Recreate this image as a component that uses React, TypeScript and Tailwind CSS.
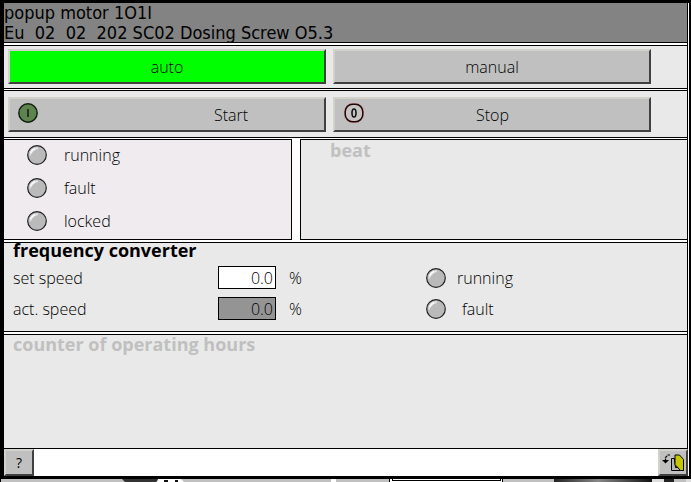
import type { ReactNode } from 'react';

const bevel =
  'border-t-2 border-l-2 border-b-2 border-r-2 border-t-[#d2d2cb] border-l-[#d2d2cb] border-b-[#404040] border-r-[#404040]';

function Lamp() {
  return (
    <svg width="20" height="20" viewBox="0 0 20 20" className="shrink-0" aria-hidden="true">
      <circle cx="10" cy="10" r="9.3" fill="#bababa" stroke="#222" strokeWidth="1.2" />
      <path d="M2.5 11 A8 8 0 0 1 11 2.3 L11 4 Q6 5 3.6 10.5 Z" fill="#e4e4e4" />
      <path d="M3.6 8 A7 7 0 0 1 8 3.6" fill="none" stroke="#f8f8f8" strokeWidth="1.6" />
    </svg>
  );
}

function StartIcon() {
  return (
    <svg width="20" height="20" viewBox="0 0 20 20" aria-hidden="true">
      <circle cx="10" cy="10" r="9.2" fill="#5c8350" stroke="#101c0c" strokeWidth="1.4" />
      <path d="M10 6v8" stroke="#0a1408" strokeWidth="1.4" />
    </svg>
  );
}

function StopIcon() {
  return (
    <svg width="20" height="20" viewBox="0 0 20 20" aria-hidden="true">
      <path d="M6 1h8l5 5v8l-5 5H6l-5-5V6Z" fill="#c8c4c4" stroke="#d09090" strokeWidth="1.4" />
      <rect x="1.200" y="1.200" width="17.600" height="17.600" rx="7.500" fill="#c8c4c4" stroke="#240808" strokeWidth="1.5" />
      <ellipse cx="10" cy="10" rx="2" ry="4" fill="none" stroke="#111" strokeWidth="1.6" />
    </svg>
  );
}

function ExitIcon() {
  return (
    <svg width="22" height="18" viewBox="0 0 22 18" aria-hidden="true">
      <path d="M8 1H6L3.500 3.500V7" fill="none" stroke="#000" strokeWidth="1.2" strokeDasharray="2.500 .8" />
      <path d="M0 6h7L3.500 9.500Z" fill="#000" />
      <path d="M12.500 4.500H9.500V16.500h12l-3-3h-5Z" fill="#b4b4b4" stroke="#000" />
      <path d="M13 1h4.500l4 4.500v11h-3L13 10.500Z" fill="#c6c600" stroke="#000" />
    </svg>
  );
}

function Status({ children, className = '' }: { children: ReactNode; className?: string }) {
  return (
    <div className={`flex items-center ${className}`}>
      <Lamp />
      {children}
    </div>
  );
}

function Speed({ id, label, fill, readOnly }: { id: string; label: string; fill: string; readOnly?: boolean }) {
  return (
    <>
      <label htmlFor={id}>{label}</label>
      <div className="flex items-center gap-[13px]">
        <input
          id={id}
          defaultValue="0.0"
          readOnly={readOnly}
          className={`h-[23px] w-[58px] border border-black pr-0.5 text-right ${fill}`}
        />
        <span>%</span>
      </div>
    </>
  );
}

export default function App() {
  return (
    <div className="bg-black font-['Open_Sans','Noto_Sans',sans-serif] text-base leading-5 font-light text-black">
      <main className="pt-[3px] pr-0.5 pb-[3px] pl-1">
        <div className="bg-white pr-px">
          <div className="flex flex-col gap-0.5 border-r border-black">
            <header className="h-10 border-b border-black bg-[#838383] font-['DejaVu_Sans_Condensed','DejaVu_Sans',sans-serif] text-lg leading-5 font-normal whitespace-pre">
              <h1>popup motor 1O1I</h1>
              <p>Eu  02  02  202 SC02 Dosing Screw O5.3</p>
            </header>

            <div className="flex flex-col gap-px">
              <section className="grid grid-cols-2 gap-[7px] border-y border-black bg-[#e9e9e9] pt-[3px] pr-9 pb-1 pl-1">
                <button className={`h-[35px] bg-[#00ff00] ${bevel}`}>auto</button>
                <button className={`h-[35px] bg-[#c0c0c0] ${bevel}`}>manual</button>
              </section>

              <section className="grid grid-cols-2 gap-[7px] border-y border-black bg-[#e9e9e9] pt-1.5 pr-9 pb-[5px] pl-1">
                <button className={`grid h-[35px] grid-cols-[20px_1fr] items-center bg-[#c0c0c0] pb-1 pl-2 ${bevel}`}>
                  <StartIcon />
                  <span className="pt-1 pl-[100px]">Start</span>
                </button>
                <button className={`grid h-[35px] grid-cols-[20px_1fr_28px] items-center bg-[#c0c0c0] pb-1 pl-[9px] ${bevel}`}>
                  <StopIcon />
                  <span className="pt-1">Stop</span>
                </button>
              </section>

              <div className="grid grid-cols-[288fr_387fr] gap-2">
                <section className="flex h-[101px] flex-col gap-[13px] border-y border-r border-black bg-[#efebef] pt-[5px] pl-[23px]">
                  <Status className="gap-[17px]">running</Status>
                  <Status className="gap-[17px]">fault</Status>
                  <Status className="gap-[17px]">locked</Status>
                </section>
                <section className="border-y border-l border-black bg-[#e9e9e9] pl-[29px]">
                  <h2 className="text-lg leading-5 font-bold text-[#c0c0c0]">beat</h2>
                </section>
              </div>
            </div>

            <section className="h-[90px] border-y border-black bg-[#e9e9e9] pl-[9px]">
              <h2 className="-mt-[3px] text-lg leading-5 font-bold">frequency converter</h2>
              <div className="mt-1.5 grid grid-cols-[205fr_208fr_261fr] items-center gap-y-2">
                <Speed id="set-speed" label="set speed" fill="bg-white" />
                <Status className="gap-[11px]">running</Status>
                <Speed id="act-speed" label="act. speed" fill="bg-[#949494]" readOnly />
                <Status className="gap-4">fault</Status>
              </div>
            </section>

            <section className="h-[115px] border-y border-black bg-[#e9e9e9] pl-[9px]">
              <h2 className="-mt-px text-lg leading-5 font-bold text-[#c0c0c0]">counter of operating hours</h2>
            </section>
          </div>

          <footer className="flex h-[27px] items-stretch justify-between">
            <button aria-label="Help" className={`w-[30px] bg-[#c0c0c0] text-sm font-normal ${bevel}`}>?</button>
            <button aria-label="Exit" className={`flex w-[30px] items-center justify-center bg-[#c0c0c0] ${bevel}`}>
              <ExitIcon />
            </button>
          </footer>
        </div>
      </main>

      <svg width="691" height="3" viewBox="0 0 691 3" preserveAspectRatio="none" className="block w-full" aria-hidden="true">
        <defs>
          <linearGradient id="tank">
            <stop offset="0" stopColor="#222" />
            <stop offset=".45" stopColor="#888" />
            <stop offset="1" stopColor="#111" />
          </linearGradient>
        </defs>
        <path d="M1 0H691V3H1Z" fill="#c0c0c0" />
        <path d="M122 0H160L156 3H125Z" fill="#333" />
        <path d="M158 0H181L184 3H157Z" fill="#fff" />
        <path d="M164 3V1H168V3M175 3V1H178V3" fill="#111" />
        <path d="M331 0H336V3H331ZM390 0H503V3H390Z" fill="#fff" />
        <path d="M389 0H390V3H389ZM392 0H393V1H500V0H501V2H392ZM502 0H503V3H502Z" fill="#000" />
        <path d="M554 0H652V3H554Z" fill="url(#tank)" />
        <path d="M652 0H664V3H652ZM686 0H691V3H686Z" fill="#ddd" />
        <path d="M664 0H674V3H664Z" fill="#222" />
      </svg>
    </div>
  );
}
